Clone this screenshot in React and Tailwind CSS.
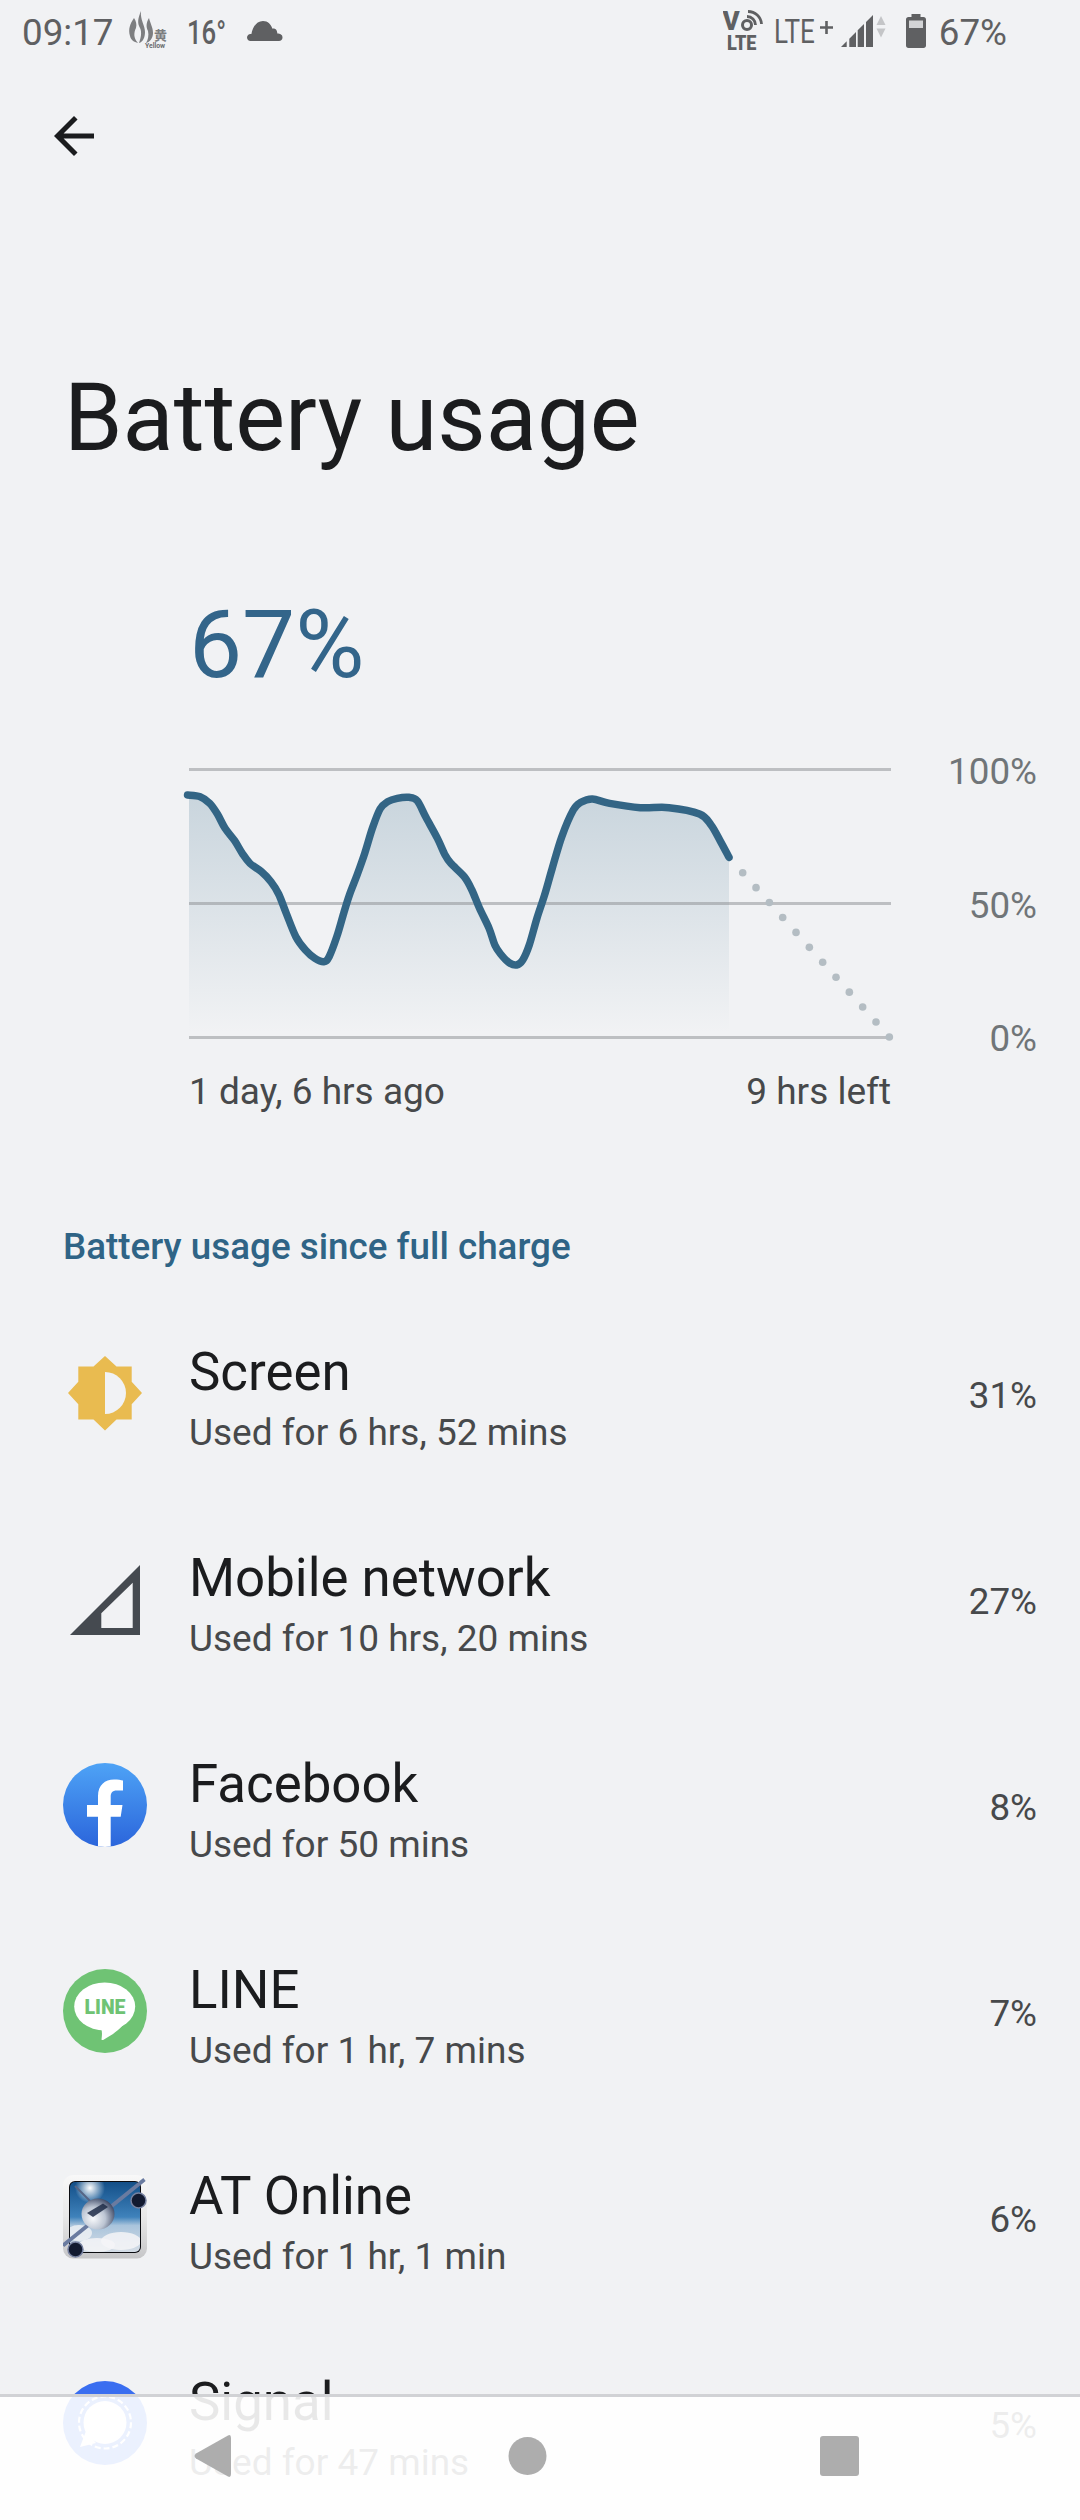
import React from "react";

const pts = [[72,165],[105,170],[130,190],[150,222],[170,265],[195,302],[215,340],[235,370],[265,395],[290,425],[310,462],[330,520],[355,590],[380,630],[405,655],[428,665],[442,650],[462,590],[480,520],[495,465],[515,405],[535,340],[555,265],[575,207],[595,185],[620,175],[650,172],[672,182],[695,232],[725,295],[745,345],[760,370],[795,410],[815,450],[835,505],[860,565],[875,615],[890,642],[912,668],[932,675],[948,660],[965,615],[985,535],[1005,465],[1025,385],[1050,290],[1080,210],[1100,187],[1130,177],[1175,190],[1255,203],[1330,203],[1410,222],[1440,255],[1465,305],[1487,352]].map(([x, y]) => [x / 2.6133 + 160, y / 3 + 740 - 760]);

function smooth(p) {
  let d = `M${p[0][0]} ${p[0][1]}`;
  for (let i = 0; i < p.length - 1; i++) {
    const a = p[Math.max(i - 1, 0)], b = p[i], c = p[i + 1], e = p[Math.min(i + 2, p.length - 1)];
    d += ` C${b[0] + (c[0] - a[0]) / 6} ${b[1] + (c[1] - a[1]) / 6} ${c[0] - (e[0] - b[0]) / 6} ${c[1] - (e[1] - b[1]) / 6} ${c[0]} ${c[1]}`;
  }
  return d;
}
const curve = smooth(pts);
const dots = Array.from({ length: 12 }, (_, i) => i);

function Chart() {
  return (
    <svg width="900" height="290" viewBox="0 0 900 290" className="block">
      <defs>
        <linearGradient id="area" x1="0" y1="0" x2="0" y2="1">
          <stop offset="0" stopColor="#c9d5dd" />
          <stop offset="1" stopColor="#f1f2f4" />
        </linearGradient>
      </defs>
      <path d={`M189 ${pts[0][1]} ${curve.replace(/^M[^C]+/, "L" + pts[0][0] + " " + pts[0][1] + " ")} L729 272 L189 272 Z`} fill="url(#area)" />
      <path d="M189 9.500H891M189 143.500H891M189 277.500H891" stroke="#8a8c8f" strokeOpacity="0.5" strokeWidth="3" fill="none" />
      <path d={curve} stroke="#336585" strokeWidth="7.500" fill="none" strokeLinecap="round" strokeLinejoin="round" />
      {dots.map((i) => (
        <circle key={i} cx={742.7 + i * 13.33} cy={112.7 + i * 14.93} r="3.800" fill="#b4bdc3" />
      ))}
    </svg>
  );
}

function StatusLeft() {
  return (
    <div className="flex items-center h-full pl-[22px]">
      <span className="text-[36.75px] leading-none text-[#5f6062] w-[106px]">09:17</span>
      <svg width="40" height="42" viewBox="0 0 40 42" className="mr-[19px] -mt-[4px]">
        <g fill="#7d7e80">
          <path d="M6 8C2 14 0 19 2 26C3 30 6 32 10 33C5 28 6 22 8 18C9 14 8 11 6 8z" />
          <path d="M13 1C10 8 9 13 12 18C14 22 13 28 11 33C15 32 17 27 17 22C17 15 12 10 13 1z" />
          <path d="M21 8C18 13 18 17 20 21C21 25 20 30 18 33C22 32 25 28 25 23C25 17 22 13 21 8z" />
        </g>
        <text x="26" y="30" fontSize="13" fontWeight="700" fill="#7d7e80" fontFamily="'Noto Sans CJK TC', sans-serif">黄</text>
        <text x="17" y="37.500" fontSize="6.800" fontWeight="700" fill="#6b6c6e" fontFamily="Roboto, sans-serif">Yellow</text>
      </svg>
      <svg width="41" height="48" viewBox="0 -6 41 48" className="mr-[19px] -mt-[2px]">
        <text transform="translate(0 30) scale(0.78 1)" fontSize="33" fontWeight="500" fill="#5f6062" fontFamily="Roboto, sans-serif">16°</text>
      </svg>
      <svg width="36" height="22" viewBox="0 0 36 22" className="-mt-[4px]">
        <path d="M3.500 21C1.500 21 0 19.500 0 17.600 0 15.300 2 13.500 4.400 14 5.500 7.500 9.500 1 16 1c5 0 8 3.500 9.500 7.800C26.500 8 28 8.400 29 9.500c1 1.200 1.300 2.500 1.300 4 2.800.2 5.200 1 5.200 3.900 0 2.100-1.600 3.600-3.500 3.600z" fill="#5f6062" />
      </svg>
    </div>
  );
}

function StatusRight() {
  return (
    <div className="flex items-center h-full pr-[73px]">
      <svg width="40" height="60" viewBox="0 -10 40 60" className="mr-[11px] -mt-[4px]">
        <text x="-0.500" y="19" fontSize="26" fontWeight="900" fill="#5f6062" fontFamily="Roboto, sans-serif">V</text>
        <circle cx="24" cy="14" r="4.500" fill="none" stroke="#5f6062" strokeWidth="3" />
        <path d="M24 5.500A8.500 8.500 0 0 1 32.500 14M25 0.500A13.500 13.500 0 0 1 38.500 13" fill="none" stroke="#5f6062" strokeWidth="2.800" />
        <text transform="translate(4 39) scale(0.86 1)" fontSize="21" fontWeight="900" fill="#5f6062" fontFamily="Roboto, sans-serif">LTE</text>
      </svg>
      <svg width="60" height="48" viewBox="0 -6 60 48" className="mr-[7px] -mt-[6px]">
        <text transform="translate(0 30.500) scale(0.79 1)" fontSize="33" fill="#5f6062" fontFamily="Roboto, sans-serif">LTE</text>
        <path d="M46 15.500H59M52.500 9V22" stroke="#5f6062" strokeWidth="2.600" />
      </svg>
      <svg width="45" height="34" viewBox="0 0 45 34" className="mr-[20px] -mt-[4px]">
        <path d="M0 33L5.700 27.300V33zM8.300 24.700L15 18V33H8.300zM16.700 16.300L23 10V33H16.700zM25 8L32 1V33H25z" fill="#5f6062" />
        <path d="M35.500 11L40 2L44.500 11z" fill="#c4c5c7" />
        <path d="M35.500 14.500L40 23.500L44.500 14.500z" fill="#c4c5c7" />
      </svg>
      <svg width="20" height="34" viewBox="0 0 20 34" className="mr-[13px] -mt-[4px]">
        <path d="M5.500 0H14.500V3H17.500C19 3 20 4 20 5.500V31.500C20 33 19 34 17.500 34H2.500C1 34 0 33 0 31.500V5.500C0 4 1 3 2.500 3H5.500z" fill="#5f6062" />
        <rect x="3" y="6.500" width="14" height="7.500" fill="#d3d4d6" />
      </svg>
      <span className="text-[36.75px] leading-none text-[#5f6062]">67%</span>
    </div>
  );
}

const ScreenIcon = () => (
  <svg viewBox="0 0 84 84" className="w-full h-full">
    <path d="M42 5L53.500 15.500H68.700V30.700L79 42L68.700 53.300V68.500H53.500L42 79.500L30.500 68.500H15.300V53.300L5 42L15.300 30.700V15.500H30.500z" fill="#e9bb50" />
    <path d="M42 21A21 21 0 0 1 42 63z" fill="#f1f2f4" />
  </svg>
);

const NetworkIcon = () => (
  <svg viewBox="0 0 84 84" className="w-full h-full">
    <path fillRule="evenodd" d="M77 8V78H7zM69.700 25.700L38.300 56.300V71H69.700z" fill="#454a50" />
  </svg>
);

const FacebookIcon = () => (
  <svg viewBox="0 0 84 84" className="w-full h-full">
    <defs>
      <linearGradient id="fb" x1="0" y1="0" x2="0" y2="1">
        <stop offset="0" stopColor="#4ea3f6" />
        <stop offset="1" stopColor="#2b65db" />
      </linearGradient>
      <clipPath id="fbc"><circle cx="42" cy="42" r="42" /></clipPath>
    </defs>
    <circle cx="42" cy="42" r="42" fill="url(#fb)" />
    <path clipPath="url(#fbc)" d="M35 84V53.700H24V42H35V33C35 22 42 16.500 51 16.500C55 16.500 58 17 60 17.500V27.500H54C49 27.500 47.700 30 47.700 34V42H59.500L57.700 53.700H47.700V84z" fill="#fff" />
  </svg>
);

const LineIcon = () => (
  <svg viewBox="0 0 84 84" className="w-full h-full">
    <circle cx="42" cy="42" r="42" fill="#6fc374" />
    <ellipse cx="41.700" cy="37.500" rx="30.500" ry="24" fill="#fff" />
    <path d="M36 58C39 60 39.500 62 38.500 70.500C39 71.500 40 71 41 70.500C47 67 54 63 60 56z" fill="#fff" />
    <text x="42" y="44.500" textAnchor="middle" fontSize="19.500" fontWeight="900" fill="#6fc374" fontFamily="Roboto, sans-serif">LINE</text>
  </svg>
);

const AtOnlineIcon = () => (
  <svg viewBox="0 0 84 84" className="w-full h-full">
    <defs>
      <linearGradient id="atframe" x1="0" y1="0" x2="0" y2="1">
        <stop offset="0" stopColor="#f8f8f8" />
        <stop offset="0.5" stopColor="#e8e8e8" />
        <stop offset="1" stopColor="#c6c6c8" />
      </linearGradient>
      <linearGradient id="atsky" x1="0" y1="0" x2="0" y2="1">
        <stop offset="0" stopColor="#134f88" />
        <stop offset="0.5" stopColor="#3f82bb" />
        <stop offset="0.62" stopColor="#a9c4dc" />
        <stop offset="1" stopColor="#d5dde6" />
      </linearGradient>
      <radialGradient id="atsun" cx="0.5" cy="0.5" r="0.5">
        <stop offset="0" stopColor="#ffffff" />
        <stop offset="1" stopColor="#ffffff" stopOpacity="0" />
      </radialGradient>
      <radialGradient id="atbody" cx="0.35" cy="0.65" r="0.75">
        <stop offset="0" stopColor="#f8f9fb" />
        <stop offset="0.5" stopColor="#bcc5d3" />
        <stop offset="1" stopColor="#2f3a58" />
      </radialGradient>
      <clipPath id="atclip"><rect x="7" y="7" width="70" height="70" rx="5" /></clipPath>
    </defs>
    <rect x="0" y="0" width="84" height="83.500" rx="10" fill="url(#atframe)" />
    <rect x="6" y="6" width="72" height="72" rx="6" fill="#0b0c10" />
    <g clipPath="url(#atclip)">
      <rect x="7" y="7" width="70" height="70" fill="url(#atsky)" />
      <circle cx="27" cy="13" r="15" fill="url(#atsun)" />
      <ellipse cx="16" cy="58" rx="13" ry="8" fill="#f1f3f5" opacity="0.8" />
      <ellipse cx="58" cy="66" rx="20" ry="9" fill="#f4f5f7" opacity="0.85" />
      <ellipse cx="34" cy="70" rx="18" ry="7" fill="#f4f5f7" opacity="0.85" />
      <path d="M12 11L27 26" stroke="#566585" strokeWidth="2" />
    </g>
    <path d="M0 70.500L81.500 4.500" stroke="#6a7ba0" strokeWidth="3.800" />
    <circle cx="75.500" cy="25.500" r="7.500" fill="#121a30" stroke="#7681a0" strokeWidth="1.500" />
    <circle cx="12.500" cy="74.500" r="7.500" fill="#121a30" stroke="#7681a0" strokeWidth="1.500" />
    <ellipse cx="35" cy="39" rx="16.500" ry="15.500" fill="url(#atbody)" />
    <path d="M24 38L40 28.500L45 32L30 42z" fill="#1f2b46" opacity="0.85" />
  </svg>
);

const SignalIcon = () => (
  <svg viewBox="0 0 84 84" className="w-full h-full">
    <circle cx="42" cy="42" r="42" fill="#3a6ef0" />
    <circle cx="42" cy="41.500" r="21.500" fill="#fff" />
    <path d="M23 50L17 66L33 62z" fill="#fff" />
    <circle cx="42" cy="41.500" r="26" fill="none" stroke="#fff" strokeWidth="2.200" strokeDasharray="6 3" />
  </svg>
);

const rows = [
  { name: "Screen", sub: "Used for 6 hrs, 52 mins", pct: "31%", icon: <ScreenIcon /> },
  { name: "Mobile network", sub: "Used for 10 hrs, 20 mins", pct: "27%", icon: <NetworkIcon /> },
  { name: "Facebook", sub: "Used for 50 mins", pct: "8%", icon: <FacebookIcon /> },
  { name: "LINE", sub: "Used for 1 hr, 7 mins", pct: "7%", icon: <LineIcon /> },
  { name: "AT Online", sub: "Used for 1 hr, 1 min", pct: "6%", icon: <AtOnlineIcon /> },
  { name: "Signal", sub: "Used for 47 mins", pct: "5%", icon: <SignalIcon /> },
];

function Row({ name, sub, pct, icon }) {
  return (
    <div className="flex items-center h-[206px] pl-[63px] pr-[43px]">
      <div className="w-[84px] h-[84px] shrink-0">{icon}</div>
      <div className="ml-[42px] flex-1 flex flex-col pt-[13px]">
        <div className="text-[52.8px] leading-[60px] text-[#1b1c1e]">{name}</div>
        <div className="text-[37px] leading-[50px] mt-[6px] text-[#47494b]">{sub}</div>
      </div>
      <div className="text-[36.75px] leading-[50px] pt-[6px] text-[#47494b]">{pct}</div>
    </div>
  );
}

export default function App() {
  return (
    <div className="relative w-[1080px] h-[2520px] overflow-hidden bg-[#f1f2f4]" style={{ fontFamily: "Roboto, sans-serif" }}>
      <div className="flex items-center justify-between h-[66px]">
        <StatusLeft />
        <StatusRight />
      </div>
      <div className="h-[140px] flex items-center pl-[44px]">
        <svg viewBox="0 0 24 24" className="w-[60px] h-[60px]">
          <path d="M20 11H7.830l5.590-5.590L12 4l-8 8 8 8 1.410-1.410L7.830 13H20v-2z" fill="#1b1c1e" />
        </svg>
      </div>
      <h1 className="mt-[162px] pl-[64px] text-[94px] leading-[100px] text-[#1b1c1e]">Battery usage</h1>
      <div className="mt-[127px] pl-[189px] text-[94.5px] leading-[100px] text-[#33658a]">67%</div>
      <div className="relative mt-[65px] h-[290px]">
        <Chart />
        <div className="absolute right-[43px] top-[-13px] text-right text-[36.75px] leading-[50px] text-[#707578]">100%</div>
        <div className="absolute right-[43px] top-[121px] text-right text-[36.75px] leading-[50px] text-[#707578]">50%</div>
        <div className="absolute right-[43px] top-[254px] text-right text-[36.75px] leading-[50px] text-[#707578]">0%</div>
      </div>
      <div className="mt-[17px] ml-[189px] w-[702px] flex justify-between text-[37px] leading-[50px] text-[#47494b]">
        <span>1 day, 6 hrs ago</span>
        <span>9 hrs left</span>
      </div>
      <div className="mt-[105px] pl-[63px] text-[36.8px] leading-[50px] font-medium text-[#2f6486]">Battery usage since full charge</div>
      <div className="mt-[18px]">
        {rows.map((r) => <Row key={r.name} {...r} />)}
      </div>
      <div className="absolute left-0 right-0 bottom-0 h-[126px] border-t-[3px] border-[#d1d2d5] bg-white/90 flex items-center">
        <svg width="1080" height="123" viewBox="0 2397 1080 123" className="block">
          <path d="M228 2435.500Q231 2434 231 2438V2474Q231 2478 228 2476.500L196 2458.500Q193 2456 196 2453.500z" fill="#adadad" />
          <circle cx="527.500" cy="2456" r="19" fill="#adadad" />
          <rect x="820" y="2436" width="39" height="40" rx="3" fill="#adadad" />
        </svg>
      </div>
    </div>
  );
}
